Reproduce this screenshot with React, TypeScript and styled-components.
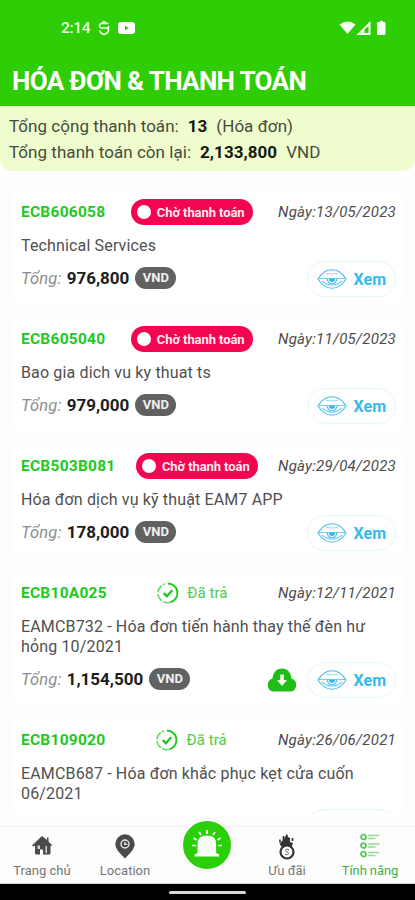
import React from "react";
import styled, { createGlobalStyle } from "styled-components";

const GlobalStyle = createGlobalStyle`
  * { box-sizing: border-box; }
  body { margin: 0; background: #fff; font-family: Roboto, "Noto Sans", sans-serif; }
`;

const Screen = styled.div`
  width: 415px;
  height: 900px;
  display: flex;
  flex-direction: column;
  overflow: hidden;
  background: #fefefe;
`;

const Header = styled.header`
  height: 106px;
  flex: none;
  background: #2fcd05;
  color: #fff;
`;

const StatusBar = styled.div`
  height: 56px;
  padding: 0 28px 0 61px;
  display: flex;
  align-items: center;
  gap: 8px;
  font-size: 15.5px;
  font-weight: 500;
  letter-spacing: -0.3px;
  color: #e9ffe2;
  svg { display: block; }
`;

const StatusRight = styled.div`
  margin-left: auto;
  display: flex;
  align-items: center;
`;

const Title = styled.h1`
  margin: 0;
  padding-left: 12px;
  font-size: 26px;
  line-height: 50px;
  font-weight: 700;
  letter-spacing: -0.65px;
  white-space: nowrap;
`;

const Summary = styled.section`
  height: 65px;
  flex: none;
  padding: 8px 9px 0;
  background: #effdce;
  border-radius: 0 0 12px 12px;
  color: #454b3c;
  font-size: 17px;
`;

const SummaryLine = styled.div`
  display: flex;
  line-height: 25.5px;
  white-space: nowrap;
  gap: 9px;
  letter-spacing: 0.04px;
  b { color: #16190f; letter-spacing: 0.05px; }
`;

const List = styled.main`
  height: 644px;
  flex: none;
  padding: 18px 10px 0;
  overflow: hidden;
  display: flex;
  flex-direction: column;
  gap: 12px;
`;

const Card = styled.article`
  flex: none;
  padding: 10px 9px 7px 11px;
  background: #fff;
  border-radius: 6px;
  box-shadow: 0 0 3px rgba(0, 0, 0, 0.03);
`;

const CardHead = styled.div`
  height: 26px;
  display: flex;
  align-items: center;
  justify-content: space-between;
  white-space: nowrap;
`;

const Code = styled.span`
  color: #20c91d;
  font-size: 15.5px;
  font-weight: 700;
  letter-spacing: 0.25px;
`;

const Pending = styled.span`
  height: 26px;
  padding: 0 8px 0 6px;
  display: flex;
  align-items: center;
  gap: 6px;
  border-radius: 13px;
  background: #f4054f;
  color: #ffe9ef;
  font-size: 13px;
  font-weight: 700;
  letter-spacing: -0.08px;
`;

const Dot = styled.i`
  width: 14px;
  height: 14px;
  border-radius: 50%;
  background: #fff;
`;

const Paid = styled.span`
  display: flex;
  align-items: center;
  gap: 8px;
  color: #4acd48;
  font-size: 15px;
  letter-spacing: 0.1px;
`;

const DateText = styled.span`
  color: #4c4c4c;
  font-size: 15px;
  font-style: italic;
  letter-spacing: 0.25px;
`;

const Description = styled.p`
  margin: 11px 0 0;
  color: #505050;
  font-size: 16px;
  line-height: 20px;
  letter-spacing: 0.15px;
`;

const CardFoot = styled.div`
  height: 36px;
  margin-top: 5px;
  display: flex;
  align-items: center;
  white-space: nowrap;
`;

const TotalLabel = styled.span`
  margin-top: -2px;
  color: #8d8d8d;
  font-size: 16.5px;
  font-style: italic;
  letter-spacing: 0.2px;
`;

const Amount = styled.b`
  margin: -2px 6px 0 5px;
  color: #1d1d1d;
  font-size: 17px;
`;

const Currency = styled.span`
  width: 41px;
  height: 22px;
  margin-top: -3px;
  border-radius: 11px;
  background: #616161;
  color: #f0f0f0;
  font-size: 13px;
  font-weight: 700;
  line-height: 22px;
  text-align: center;
`;

const Actions = styled.div`
  margin-left: auto;
  display: flex;
  align-items: center;
  gap: 10px;
`;

const ViewButton = styled.button`
  width: 89px;
  height: 36px;
  padding: 0 9px;
  display: flex;
  align-items: center;
  justify-content: space-between;
  border: 1px solid #e3f6fc;
  border-radius: 18px;
  background: #fff;
  color: #35b9ef;
  font: 700 16px Roboto, sans-serif;
`;

const TabBar = styled.nav`
  height: 58px;
  margin-top: 11px;
  flex: none;
  display: grid;
  grid-template-columns: 84px 82px 81px 80px 86px;
  border-top: 1px solid #f0f2f4;
  border-bottom: 1px solid #d5d5d5;
  background: #fdfdfd;
`;

const Tab = styled.div<{ $active?: boolean }>`
  display: flex;
  flex-direction: column;
  align-items: center;
  padding-top: 5px;
  color: ${(p) => (p.$active ? "#3fb342" : "#777")};
  font-size: 13px;
  line-height: 18px;
  letter-spacing: ${(p) => (p.$active ? "-0.1px" : "0")};
  white-space: nowrap;
  svg { height: 28px; margin-bottom: 2px; display: block; }
`;

const AlarmButton = styled.div`
  width: 52px;
  height: 52px;
  margin: -8px auto 0;
  border: 2px solid #fff;
  outline: 1px solid #f3f5f3;
  border-radius: 50%;
  background: #2acf09;
`;

const GestureBar = styled.footer`
  height: 16px;
  flex: none;
  display: flex;
  justify-content: center;
  padding-top: 7px;
  background: #000;
`;

const Handle = styled.div`
  width: 77px;
  height: 3px;
  border-radius: 2px;
  background: #d9d9d9;
`;

const EyeIcon = () => (
  <svg width="30" height="22" viewBox="0 0 30 22" fill="none" stroke="#48bdec" strokeWidth="1.1">
    <path d="M1 11C5 4.500 9.500 1.800 15 1.800S25 4.500 29 11C25 17.500 20.500 20.200 15 20.200S5 17.500 1 11Z" />
    <path d="M1 10.500h28M5 13c5 5.300 15 5.300 20 0" strokeOpacity=".75" />
    <path d="M9 5.200c4 1 8 1 12 0" strokeOpacity=".6" />
    <path d="M10.300 11a4.700 4.700 0 0 0 9.400 0" />
    <path d="M12.500 11a2.500 2.500 0 0 0 5 0Z" fill="#2da9e2" />
  </svg>
);

const CheckIcon = () => (
  <svg width="22" height="22" viewBox="0 0 22 22" fill="none" stroke="#20c91d">
    <path d="M11 1.500a9.500 9.500 0 0 1 3 18.500" strokeWidth="2" />
    <path d="M14 20A9.500 9.500 0 1 1 8 2" strokeWidth="1.500" strokeDasharray="8 1.500" strokeOpacity=".7" />
    <path d="m6.700 11 3.100 3.200 5.400-6" strokeWidth="2.400" />
  </svg>
);

const CloudIcon = () => (
  <svg width="30" height="24" viewBox="0 0 30 24">
    <path d="M6.500 23.500a6.700 6.700 0 0 1-1-13C6 4.500 9.500.5 15 .5s9 4 9.500 10a6.700 6.700 0 0 1-1 13Z" fill="#1ebe16" />
    <path d="M13.200 6.500h3.600V12H20l-5 6-5-6h3.200Z" fill="#f4fff2" />
  </svg>
);

const HomeIcon = () => (
  <svg width="22" height="28" viewBox="0 0 22 28" fill="#4b4b4b">
    <path d="M11 4 1 13.500l1.500 1L4 13.500V21q0 1.500 1.500 1.500H9V17.500h3v5h6q1.500 0 1.500-1.500v-7.500l1.500.5V13l-3.500-3.500V5.500H16V8Z" />
    <path d="M6.500 13.500H9V17H6.500zM14.500 14h1.500v7h-1.500z" fill="#d6d6d6" />
  </svg>
);

const PinIcon = () => (
  <svg width="22" height="28" viewBox="0 0 22 28">
    <path d="M11 26.500C5 20.500 1.300 16.500 1.300 12a9.700 9.700 0 0 1 19.400 0C20.700 16.500 17 20.500 11 26.500Z" fill="#4b4b4b" />
    <circle cx="11" cy="12" r="4" fill="none" stroke="#e4e4e4" strokeWidth="1.400" />
    <path d="M10.800 10v2.300h2.500" fill="none" stroke="#ededed" strokeWidth="1.300" />
  </svg>
);

const SirenIcon = () => (
  <svg width="48" height="48" viewBox="0 0 48 48" fill="#f8fff6">
    <path d="M14.500 32V22.500q0-8 9.300-8t9.300 8V32l3 1.500V35.500H11.500V33.500Z" />
    <path d="M24 9v4M16 11l2 3M32 11l-2 3M10.500 17l3 2M37.500 17l-3 2M9 24.500h4M39 24.500h-4" stroke="#f8fff6" strokeWidth="1.700" />
  </svg>
);

const OfferIcon = () => (
  <svg width="20" height="28" viewBox="0 0 20 28">
    <path d="M7.500 6 10 1.500 11 5l2 1v4l3 1-1.500 4H5L2.500 12 5 9Z" fill="#333" />
    <path d="M3 7.500v3M15.500 6v3M6.500 4v4" stroke="#333" strokeWidth="1.700" />
    <circle cx="10" cy="20" r="6.500" fill="#fff" stroke="#333" strokeWidth="2.200" />
    <path d="M12 17.700c-3-1.500-5 1-2 2.300 3 1.200 1 3.700-2 2.200" fill="none" stroke="#555" strokeWidth="1" />
  </svg>
);

const FeaturesIcon = () => (
  <svg width="20" height="28" viewBox="0 0 20 28" fill="none" stroke="#4cc64c">
    {[4.5, 13, 21.5].map((y) => (
      <g key={y}>
        <circle cx="3.5" cy={y + 0.5} r="2.5" strokeWidth="1.700" />
        <path d={`M8 ${y - 1}h11.500M8 ${y + 2}h7.500`} strokeWidth="1.500" strokeOpacity=".6" />
      </g>
    ))}
  </svg>
);

const ShieldIcon = () => (
  <svg width="12" height="15" viewBox="0 0 12 15" fill="none" stroke="#e9ffe2" strokeWidth="1.500">
    <path d="M10.500 2.500H4Q1.500 2.500 1.500 4.800T4 7h4q2.500 0 2.500 2.500Q10.500 12 6 13.500 2 12 1.500 9.500M3 7h7.500V5" />
    <path d="M4 1.500 6 .8l2 .7" />
  </svg>
);

const VideoIcon = () => (
  <svg width="17" height="14" viewBox="0 0 17 14">
    <rect y="1" width="17" height="12" rx="3" fill="#fff" />
    <path d="m7 4.700 4 2.300-4 2.300Z" fill="#2fcd05" />
  </svg>
);

const SignalIcons = () => (
  <svg width="48" height="16" viewBox="0 0 48 16" fill="#f5fff2">
    <path d="M.5 4.500q8-6 16 0L8.500 14Z" />
    <path d="M17.500 15 31.500 1v14Z" />
    <path d="M25.500 13V9.500L29.500 6v7Z" fill="#2fcd05" />
    <path d="M39 2h2V.7h3V2h1.200q1.300 0 1.300 1.300v10.400q0 1.300-1.300 1.300h-5.900Q38 15 38 13.700V3q0-1 1-1Z" />
  </svg>
);

type Invoice = { code: string; date: string; text: string; total: string; paid?: boolean };

const invoices: Invoice[] = [
  { code: "ECB606058", date: "13/05/2023", text: "Technical Services", total: "976,800" },
  { code: "ECB605040", date: "11/05/2023", text: "Bao gia dich vu ky thuat ts", total: "979,000" },
  { code: "ECB503B081", date: "29/04/2023", text: "Hóa đơn dịch vụ kỹ thuật EAM7 APP", total: "178,000" },
  { code: "ECB10A025", date: "12/11/2021", text: "EAMCB732 - Hóa đơn tiến hành thay thế đèn hư hỏng 10/2021", total: "1,154,500", paid: true },
  { code: "ECB109020", date: "26/06/2021", text: "EAMCB687 - Hóa đơn khắc phục kẹt cửa cuốn 06/2021", total: "", paid: true },
];

const InvoiceCard = ({ code, date, text, total, paid }: Invoice) => (
  <Card>
    <CardHead>
      <Code>{code}</Code>
      {paid ? <Paid><CheckIcon />Đã trả</Paid> : <Pending><Dot />Chờ thanh toán</Pending>}
      <DateText>Ngày:{date}</DateText>
    </CardHead>
    <Description>{text}</Description>
    <CardFoot>
      {total && (
        <>
          <TotalLabel>Tổng:</TotalLabel>
          <Amount>{total}</Amount>
          <Currency>VND</Currency>
        </>
      )}
      <Actions>
        {paid && total && <CloudIcon />}
        <ViewButton><EyeIcon />{total && "Xem"}</ViewButton>
      </Actions>
    </CardFoot>
  </Card>
);

export default function App() {
  return (
    <Screen>
      <GlobalStyle />
      <Header>
        <StatusBar>
          2:14
          <ShieldIcon />
          <VideoIcon />
          <StatusRight><SignalIcons /></StatusRight>
        </StatusBar>
        <Title>HÓA ĐƠN &amp; THANH TOÁN</Title>
      </Header>
      <Summary>
        <SummaryLine><span>Tổng cộng thanh toán:</span><b>13</b><span>(Hóa đơn)</span></SummaryLine>
        <SummaryLine><span>Tổng thanh toán còn lại:</span><b>2,133,800</b><span>VND</span></SummaryLine>
      </Summary>
      <List>
        {invoices.map((invoice) => <InvoiceCard key={invoice.code} {...invoice} />)}
      </List>
      <TabBar>
        <Tab><HomeIcon />Trang chủ</Tab>
        <Tab><PinIcon />Location</Tab>
        <AlarmButton><SirenIcon /></AlarmButton>
        <Tab><OfferIcon />Ưu đãi</Tab>
        <Tab $active><FeaturesIcon />Tính năng</Tab>
      </TabBar>
      <GestureBar><Handle /></GestureBar>
    </Screen>
  );
}
